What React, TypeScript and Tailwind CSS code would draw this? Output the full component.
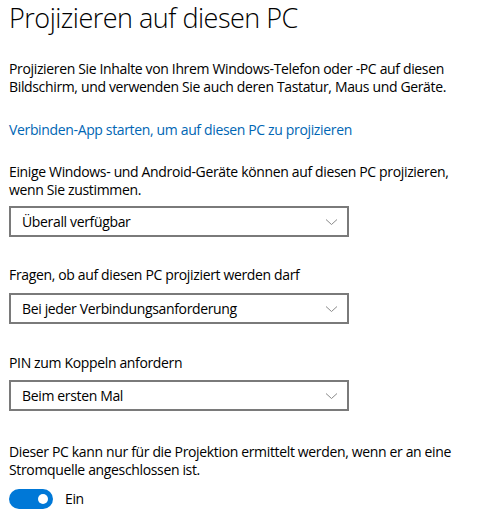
const font = { fontFamily: '"Open Sans", "Noto Sans", sans-serif' };

function Dropdown({ value, className = "" }: { value: string; className?: string }) {
  return (
    <div
      className={`flex h-[31px] w-[340px] items-center justify-between border-2 border-[#7a7a7a] bg-white pl-[11px] pr-[9px] text-[14px] tracking-[-0.35px] text-black ${className}`}
    >
      <span>{value}</span>
      <svg width="13" height="8" viewBox="0 0 13 8" fill="none">
        <path d="M1 1.5 L6.5 6.5 L12 1.5" stroke="#8a8a8a" strokeWidth="1" />
      </svg>
    </div>
  );
}

export default function App() {
  return (
    <div
      className="min-h-[515px] w-[492px] bg-white pl-[9px] text-[14px] leading-[18px] tracking-[-0.35px] text-black"
      style={font}
    >
      {/* Title */}
      <h1 className="text-[27px] font-light leading-[36px] tracking-[-0.5px]">
        Projizieren auf diesen PC
      </h1>

      <p className="mt-[24px] w-[470px]">
        Projizieren Sie Inhalte von Ihrem Windows-Telefon oder -PC auf diesen Bildschirm, und
        verwenden Sie auch deren Tastatur, Maus und Geräte.
      </p>

      <p className="mt-[25px] text-[#0066b4]">
        Verbinden-App starten, um auf diesen PC zu projizieren
      </p>

      <p className="mt-[24px] w-[470px]">
        Einige Windows- und Android-Geräte können auf diesen PC projizieren, wenn Sie zustimmen.
      </p>
      <Dropdown value="Überall verfügbar" className="mt-[7px]" />

      <p className="mt-[29px]">Fragen, ob auf diesen PC projiziert werden darf</p>
      <Dropdown value="Bei jeder Verbindungsanforderung" className="mt-[9px]" />

      <p className="mt-[30px]">PIN zum Koppeln anfordern</p>
      <Dropdown value="Beim ersten Mal" className="mt-[8px]" />

      <p className="mt-[32px] w-[470px]">
        Dieser PC kann nur für die Projektion ermittelt werden, wenn er an eine Stromquelle
        angeschlossen ist.
      </p>

      {/* Toggle */}
      <div className="mt-[10px] flex items-center gap-[12px]">
        <div className="flex h-[20px] w-[44px] items-center justify-end rounded-full bg-[#0078d7] pr-[5px]">
          <div className="h-[10px] w-[10px] rounded-full bg-white" />
        </div>
        <span>Ein</span>
      </div>
    </div>
  );
}
